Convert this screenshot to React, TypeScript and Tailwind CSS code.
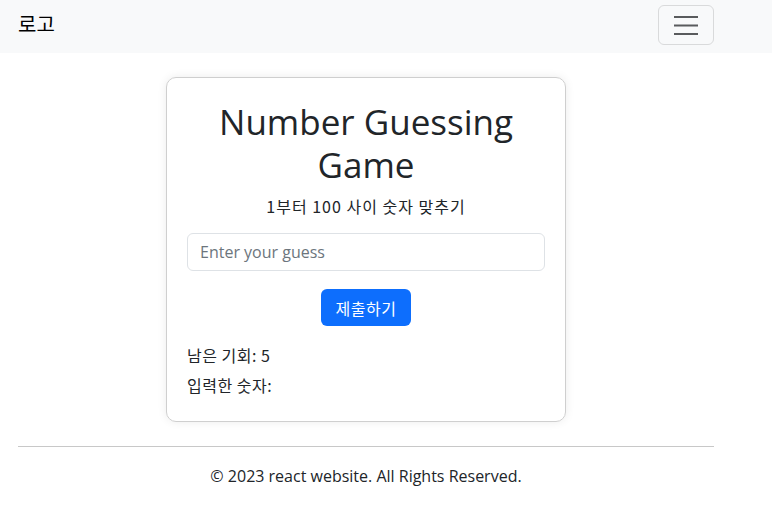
export default function App() {
  const font = { fontFamily: '"Open Sans", "Noto Sans CJK KR", sans-serif' };
  const kr = { fontFamily: '"Noto Sans CJK KR", sans-serif' };
  return (
    <div className="min-h-[509px] bg-white text-[#212529]" style={font}>
      {/* Navbar */}
      <nav className="bg-[#f8f9fa] h-[53px]">
        <div className="w-[732px] h-full px-[18px] pt-[5px] flex items-start justify-between">
          <span className="text-[20px] leading-[38px] text-black" style={kr}>
            로고
          </span>
          <button className="w-[56px] h-[40px] border border-[#d9dadb] rounded-[6px] flex items-center justify-center">
            <svg width="26" height="22" viewBox="0 0 26 22">
              <path d="M1 3h24M1 11.5h24M1 20h24" stroke="#595b5d" strokeWidth="2.2" />
            </svg>
          </button>
        </div>
      </nav>

      <main className="w-[732px] flex justify-center pt-6">
        <div className="w-[400px] border border-[#cfcfcf] rounded-[10px] shadow-[0_0_10px_rgba(0,0,0,0.08)] px-5 pt-5 pb-6">
          <h1 className="text-center text-[35px] leading-[43px] font-normal mb-2 pt-[2px]">
            Number Guessing Game
          </h1>
          <p className="text-center text-[16px] leading-6 tracking-[1px]" style={kr}>
            1부터 100 사이 숫자 맞추기
          </p>
          <input
            type="text"
            placeholder="Enter your guess"
            className="mt-[15px] w-full h-[38px] border border-[#dee2e6] rounded-[6px] px-3 text-[16px] placeholder:text-[#6c757d] outline-none"
          />
          <div className="flex justify-center mt-[18px]">
            <button className="w-[90px] h-[37px] bg-[#0d6efd] text-white rounded-[6px] text-[16px] tracking-[0.5px]" style={kr}>
              제출하기
            </button>
          </div>
          <div className="mt-[17px] flex flex-col gap-[6px] text-[16px] leading-6 tracking-[0.5px]" style={kr}>
            <p>남은 기회: 5</p>
            <p>입력한 숫자:</p>
          </div>
        </div>
      </main>

      <footer className="w-[732px] px-[18px] mt-6">
        <hr className="border-t border-[#c8c8c8]" />
        <p className="text-center text-[16px] leading-6 mt-[17px]">
          © 2023 react website. All Rights Reserved.
        </p>
      </footer>
    </div>
  );
}
